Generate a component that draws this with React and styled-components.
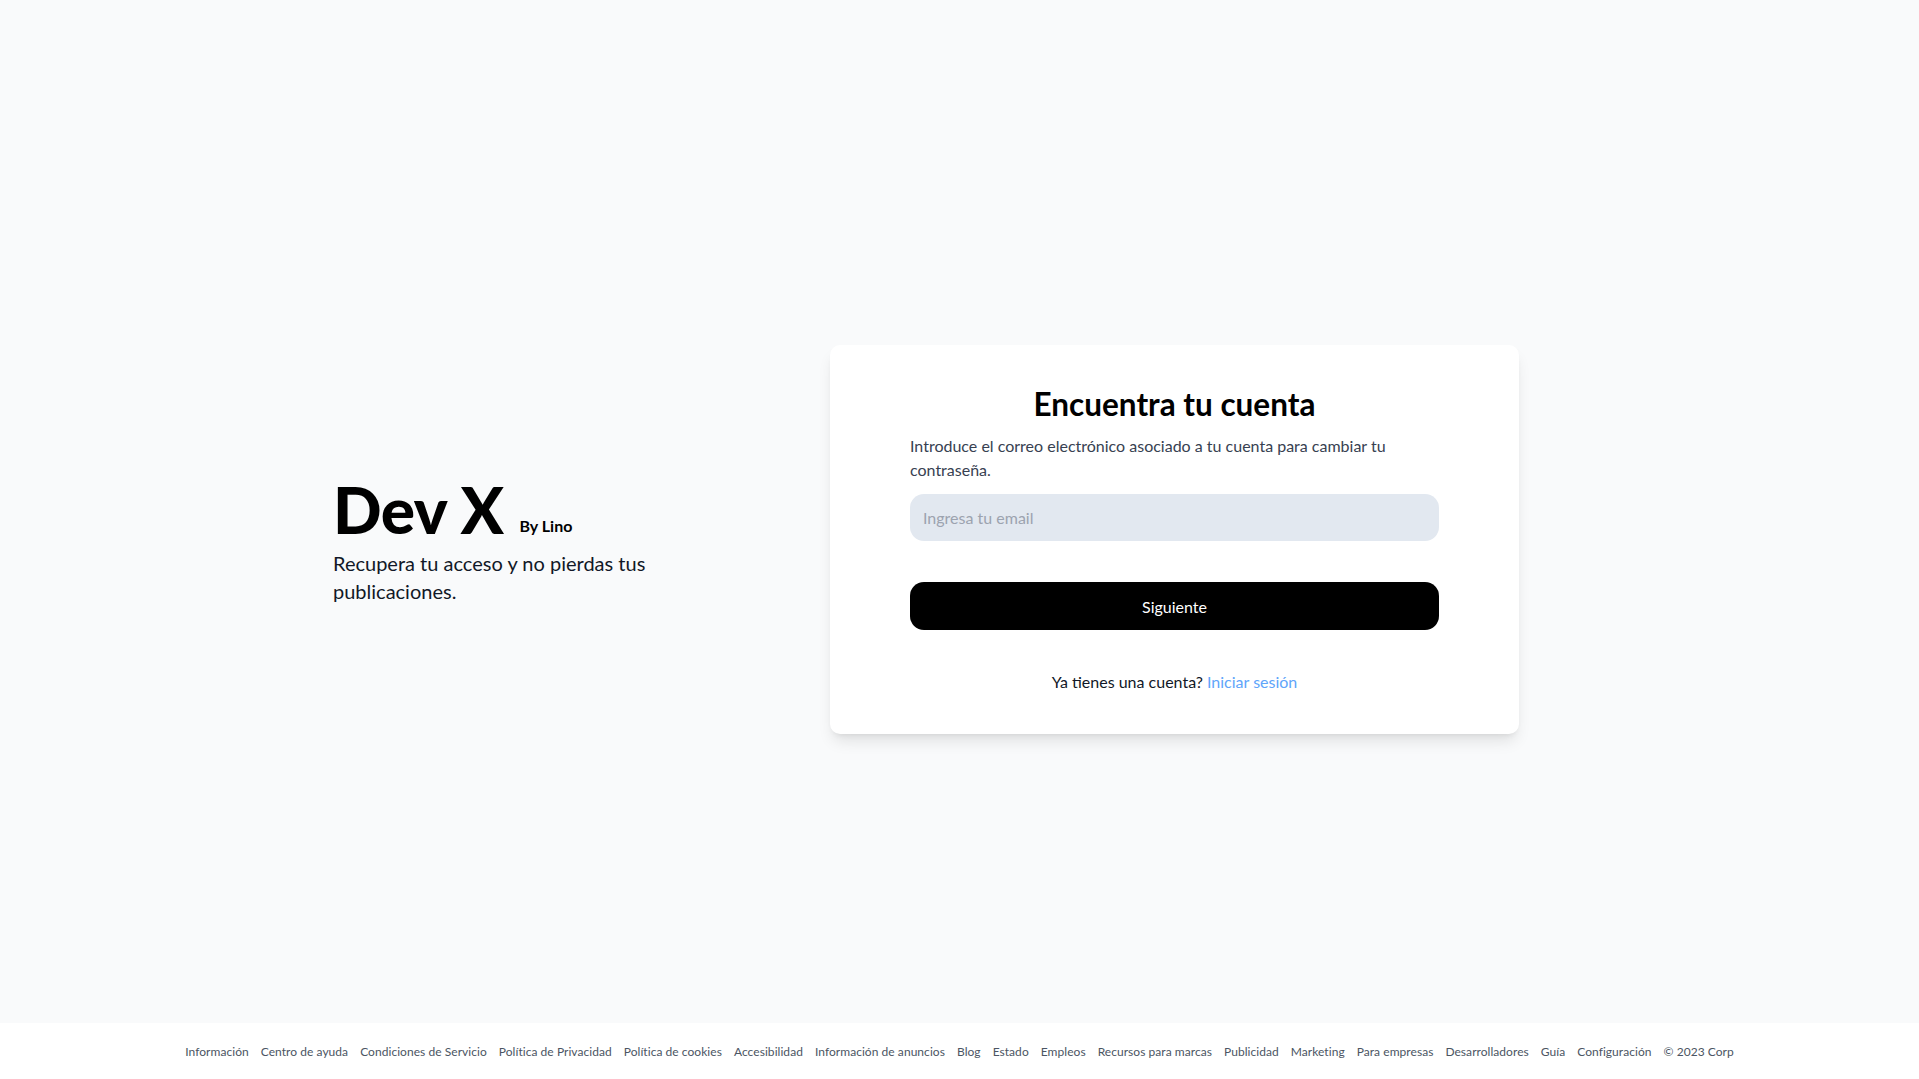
import React from "react";
import styled, { createGlobalStyle } from "styled-components";

const GlobalStyle = createGlobalStyle`
  * { box-sizing: border-box; }
  html, body { margin: 0; padding: 0; }
  body {
    background: #f9fafb;
    font-family: Lato, "Noto Sans", "Liberation Sans", sans-serif;
    color: #111827;
  }
`;

const Main = styled.main`
  height: 100vh;
  display: flex;
  align-items: center;
  padding-left: 333px;
  gap: 60px;
`;

const Intro = styled.section`
  width: 437px;
  display: flex;
  flex-direction: column;
`;

const BrandRow = styled.div`
  display: flex;
  align-items: baseline;
  gap: 16px;
`;

const Brand = styled.h1`
  margin: 0;
  font-size: 64px;
  line-height: 72px;
  font-weight: 900;
  color: #000;
  letter-spacing: -0.5px;
`;

const ByLine = styled.span`
  font-size: 16px;
  font-weight: 700;
  color: #000;
  position: relative;
  top: -2px;
`;

const Tagline = styled.p`
  margin: 3px 0 0;
  width: 330px;
  font-size: 20px;
  line-height: 28px;
  color: #111827;
`;

const Card = styled.section`
  width: 689px;
  background: #fff;
  border-radius: 10px;
  box-shadow: 0 10px 15px -3px rgba(0, 0, 0, 0.1), 0 4px 6px -4px rgba(0, 0, 0, 0.1);
  padding: 41px 80px 40px;
  display: flex;
  flex-direction: column;
`;

const Title = styled.h2`
  margin: 0;
  text-align: center;
  font-size: 31.5px;
  line-height: 36px;
  font-weight: 700;
  color: #000;
`;

const Description = styled.p`
  margin: 12px 0 0;
  font-size: 16px;
  line-height: 24px;
  color: #374151;
`;

const EmailInput = styled.input`
  margin-top: 12px;
  height: 47px;
  width: 100%;
  border: none;
  outline: none;
  border-radius: 14px;
  background: #e2e8f0;
  padding: 0 13px;
  font-family: inherit;
  font-size: 16px;
  color: #111827;
  &::placeholder { color: #9ca3af; }
`;

const SubmitButton = styled.button`
  margin-top: 41px;
  height: 48px;
  width: 100%;
  border: none;
  border-radius: 14px;
  background: #000;
  color: #fff;
  font-family: inherit;
  font-size: 16px;
  cursor: pointer;
`;

const SignIn = styled.p`
  margin: 40px 0 0;
  text-align: center;
  font-size: 16px;
  line-height: 24px;
  color: #111827;
`;

const Link = styled.a`
  color: #60a5fa;
  text-decoration: none;
`;

const Footer = styled.footer`
  position: fixed;
  left: 0;
  right: 0;
  bottom: 0;
  height: 56px;
  background: #fff;
  display: flex;
  align-items: center;
  justify-content: center;
`;

const FooterNav = styled.nav`
  display: flex;
  gap: 12px;
  flex-wrap: wrap;
  justify-content: center;
`;

const FooterItem = styled.a`
  font-size: 12px;
  color: #4b5563;
  text-decoration: none;
  white-space: nowrap;
  letter-spacing: 0.05px;
`;

const footerLinks = [
  "Información",
  "Centro de ayuda",
  "Condiciones de Servicio",
  "Política de Privacidad",
  "Política de cookies",
  "Accesibilidad",
  "Información de anuncios",
  "Blog",
  "Estado",
  "Empleos",
  "Recursos para marcas",
  "Publicidad",
  "Marketing",
  "Para empresas",
  "Desarrolladores",
  "Guía",
  "Configuración",
  "© 2023 Corp",
];

export default function App() {
  return (
    <>
      <GlobalStyle />
      <Main>
        <Intro>
          <BrandRow>
            <Brand>Dev X</Brand>
            <ByLine>By Lino</ByLine>
          </BrandRow>
          <Tagline>Recupera tu acceso y no pierdas tus publicaciones.</Tagline>
        </Intro>
        <Card>
          <Title>Encuentra tu cuenta</Title>
          <Description>
            Introduce el correo electrónico asociado a tu cuenta para cambiar tu contraseña.
          </Description>
          <EmailInput type="email" placeholder="Ingresa tu email" />
          <SubmitButton type="button">Siguiente</SubmitButton>
          <SignIn>
            Ya tienes una cuenta? <Link href="#">Iniciar sesión</Link>
          </SignIn>
        </Card>
      </Main>
      <Footer>
        <FooterNav>
          {footerLinks.map((l) => (
            <FooterItem key={l} href="#">{l}</FooterItem>
          ))}
        </FooterNav>
      </Footer>
    </>
  );
}
